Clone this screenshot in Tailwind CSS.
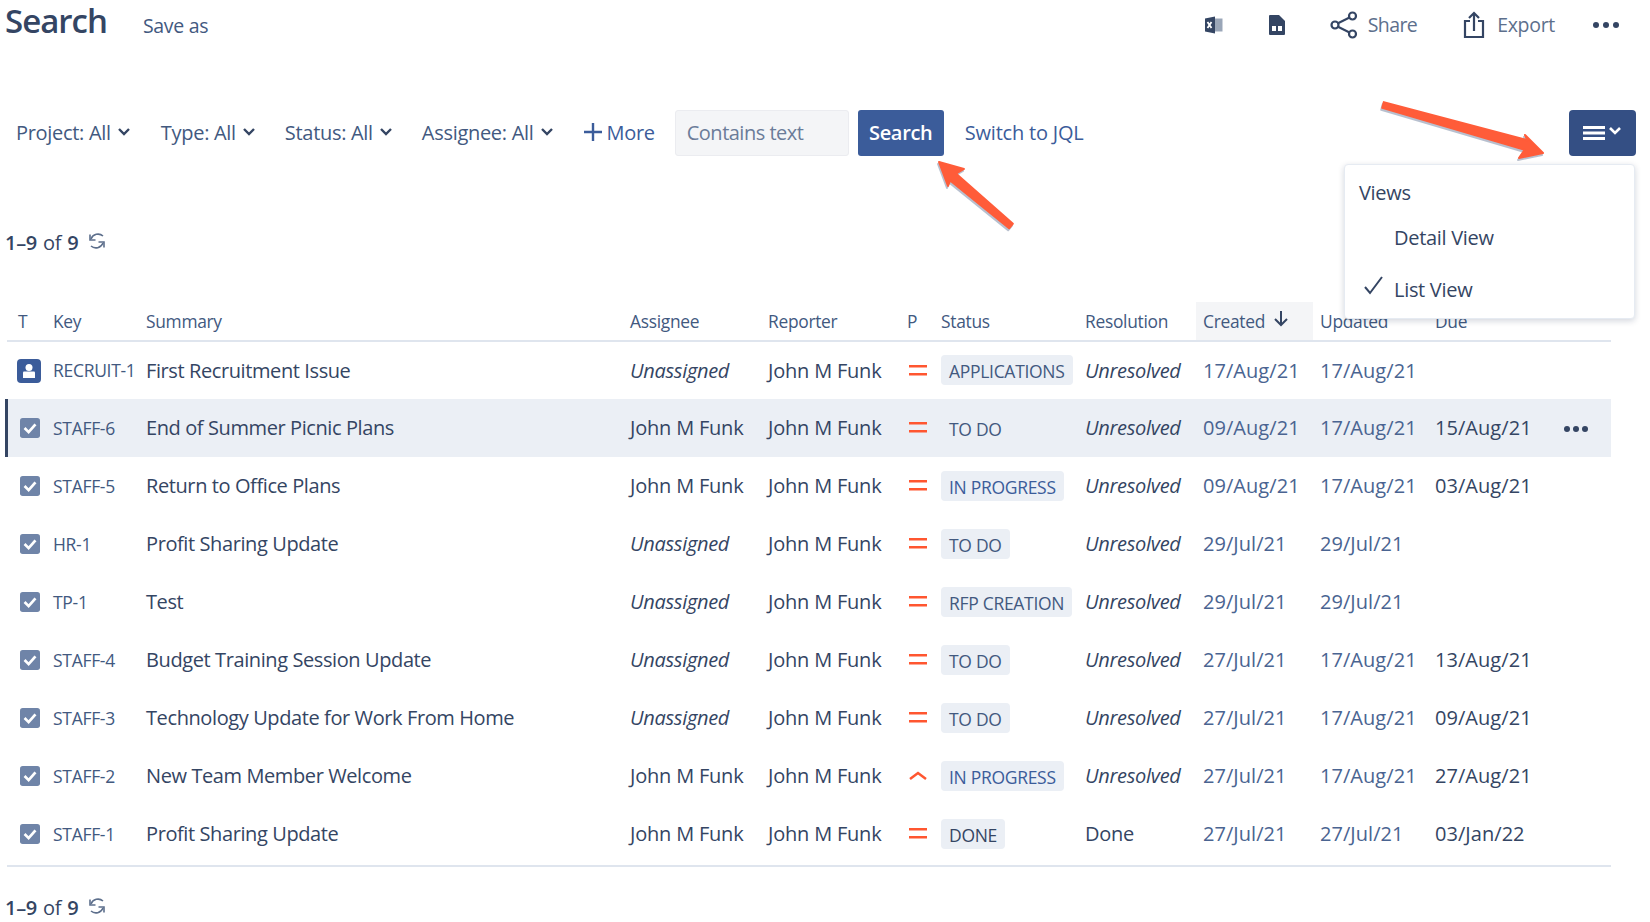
<!DOCTYPE html>
<html lang="en">
<head>
<meta charset="UTF-8">
<meta name="viewport" content="width=device-width, initial-scale=1.0">
<script src="https://cdn.jsdelivr.net/npm/@tailwindcss/browser@4"></script>
<title>Search</title>
</head>
<body class="bg-white">
<div class="relative w-[1650px] h-[922px] overflow-hidden font-['Open_Sans','Noto_Sans',sans-serif] text-[#344563] text-[20px] tracking-[-0.3px]">

  <!-- page header -->
  <header class="flex items-center h-[50px] pl-[5px] pr-[30px]">
    <h1 class="-mt-[10px] text-[33px] font-semibold leading-none tracking-[-1px] text-[#344563]">Search</h1>
    <a class="ml-[36px] mt-[1px] text-[19.500px] text-[#42597f]">Save as</a>
    <div class="ml-auto flex items-center text-[#5d6f8c]">
      <svg class="w-[20px] h-[20px] mr-[44px] text-[#344563]" viewBox="0 0 20 20"><path fill="#9aa6b8" d="M9 3.500h9.500v13H9z"/><path fill="currentColor" d="M1 3.500 11 1.500v17l-10-2z"/><path fill="none" stroke="#fff" stroke-width="1.800" d="m3.500 7 4 6m0-6-4 6"/></svg>
      <svg class="w-[18px] h-[22px] mr-[44px] text-[#344563]" viewBox="0 0 18 22"><path fill="currentColor" d="M2 1h9l6 6v13a1 1 0 0 1-1 1H2a1 1 0 0 1-1-1V2a1 1 0 0 1 1-1z"/><path fill="#fff" d="M4 12h10v5H4z"/><path fill="currentColor" d="M8 12h2v5H8z"/></svg>
      <svg class="w-[28px] h-[28px] mr-[10px] text-[#344563]" viewBox="0 0 28 28" fill="none" stroke="currentColor" stroke-width="2.200"><circle cx="5" cy="14" r="3.500"/><circle cx="22.500" cy="5" r="3.500"/><circle cx="22.500" cy="23" r="3.500"/><path d="m8 12.300 11.500-5.700M8 15.700l11.500 5.700"/></svg>
      <span class="mr-[46px] text-[19.500px] tracking-[-0.6px]">Share</span>
      <svg class="w-[22px] h-[28px] mr-[12px] text-[#344563]" viewBox="0 0 22 28" fill="none" stroke="currentColor" stroke-width="2.200"><path d="M7 10H2v16h18V10h-5M11 20V2M6 7l5-5 5 5"/></svg>
      <span class="mr-[38px] text-[19.500px]">Export</span>
      <div class="flex gap-[4px] mr-[1px]"><i class="w-[6px] h-[6px] rounded-full bg-[#344563]"></i><i class="w-[6px] h-[6px] rounded-full bg-[#344563]"></i><i class="w-[6px] h-[6px] rounded-full bg-[#344563]"></i></div>
    </div>
  </header>

  <!-- filter bar -->
  <div class="flex items-center h-[46px] mt-[60px] pl-[16px] pr-[14px] text-[#42597f]">
    <span>Project: All</span>
    <svg class="w-[14px] h-[10px] ml-[6px] mr-[30px] mb-[3px]" viewBox="0 0 14 10" fill="none" stroke="#344563" stroke-width="2.400"><path d="m2 2 5 5 5-5"/></svg>
    <span>Type: All</span>
    <svg class="w-[14px] h-[10px] ml-[6px] mr-[29px] mb-[3px]" viewBox="0 0 14 10" fill="none" stroke="#344563" stroke-width="2.400"><path d="m2 2 5 5 5-5"/></svg>
    <span>Status: All</span>
    <svg class="w-[14px] h-[10px] ml-[6px] mr-[29px] mb-[3px]" viewBox="0 0 14 10" fill="none" stroke="#344563" stroke-width="2.400"><path d="m2 2 5 5 5-5"/></svg>
    <span>Assignee: All</span>
    <svg class="w-[14px] h-[10px] ml-[6px] mr-[30px] mb-[3px]" viewBox="0 0 14 10" fill="none" stroke="#344563" stroke-width="2.400"><path d="m2 2 5 5 5-5"/></svg>
    <svg class="w-[18px] h-[18px] mr-[5px] mb-[2px]" viewBox="0 0 18 18" fill="none" stroke="#3b5c9a" stroke-width="2.400"><path d="M9 0v18M0 9h18"/></svg>
    <span class="text-[#3b5c9a] mr-[20px]">More</span>
    <div class="flex items-center w-[174px] h-[46px] pl-[11px] bg-[#f4f5f7] border border-[#ebecf0] rounded-[3px] text-[#6b7c99] tracking-[-0.5px]">Contains text</div>
    <button class="w-[86px] h-[46px] ml-[9px] rounded-[3px] bg-[#3b5c9a] text-white font-semibold">Search</button>
    <span class="ml-[21px] text-[#3b5c9a] tracking-[-0.2px]">Switch to JQL</span>
    <button class="ml-auto flex items-center justify-center gap-[3px] w-[67px] h-[46px] rounded-[4px] bg-[#344f84]">
      <svg class="w-[22px] h-[16px]" viewBox="0 0 22 16" fill="#fff"><path d="M0 1h22v3H0zM0 6.500h22v3H0zM0 12h22v3H0z"/></svg>
      <svg class="w-[14px] h-[10px] mb-[4px]" viewBox="0 0 14 10" fill="none" stroke="#fff" stroke-width="2.600"><path d="m2 2 5 5 5-5"/></svg>
    </button>
  </div>

  <!-- count -->
  <div class="flex items-center h-[30px] mt-[72px] pl-[5px] text-[#344563]">
    <b class="font-semibold">1–9</b><span class="mx-[6px]">of</span><b class="font-semibold">9</b>
    <svg class="w-[20px] h-[22px] ml-[9px] mb-[5px]" viewBox="0 0 20 20" fill="none" stroke="#5d6f8c" stroke-width="1.600"><path d="M16 5A7.500 7.500 0 0 0 4 8"/><path d="M3 3.500V9h5.500"/><path d="M4 15a7.500 7.500 0 0 0 12-3"/><path d="M17 16.500V11h-5.500"/></svg>
  </div>

  <!-- issue table -->
  <table class="ml-[7px] mt-[44px] w-[1604px] table-fixed border-collapse">
    <colgroup>
      <col class="w-[46px]"><col class="w-[93px]"><col class="w-[484px]"><col class="w-[138px]"><col class="w-[139px]"><col class="w-[34px]"><col class="w-[144px]"><col class="w-[111px]"><col class="w-[117px]"><col class="w-[115px]"><col class="w-[118px]"><col>
    </colgroup>
    <thead>
      <tr class="h-[39px] border-b-2 border-[#dfe5ee] text-left text-[17.400px] text-[#42597f] [&>th]:font-medium [&>th]:pt-[1px]">
        <th class="pl-[11px]">T</th><th>Key</th><th>Summary</th><th>Assignee</th><th>Reporter</th><th>P</th><th>Status</th><th>Resolution</th>
        <th class="bg-[#f4f5f7] pl-[7px]"><span class="inline-flex items-center gap-[9px]">Created<svg class="w-[14px] h-[16px] mb-[4px]" viewBox="0 0 14 16" fill="none" stroke="#344563" stroke-width="2"><path d="M7 0v14M1 8l6 6 6-6"/></svg></span></th>
        <th class="pl-[7px]">Updated</th><th class="pl-[7px]">Due</th><th></th>
      </tr>
    </thead>
    <tbody class="[&>tr]:h-[58px] [&_td]:py-0 [&_td]:whitespace-nowrap">
      <tr>
        <td class="pl-[10px]"><svg class="w-[24px] h-[24px]" viewBox="0 0 24 24"><rect width="24" height="24" rx="4" fill="#3b5c9a"/><circle cx="12" cy="8.500" r="3.500" fill="#fff"/><path fill="#fff" d="M6 13.500q0-1 1-1h10q1 0 1 1V19H6z"/></svg></td>
        <td class="text-[17.500px] text-[#42597f]">RECRUIT-1</td><td class="tracking-[-0.4px]">First Recruitment Issue</td><td class="italic">Unassigned</td><td class="tracking-[-0.2px]">John M Funk</td>
        <td><svg class="w-[18px] h-[12px] ml-[2px]" viewBox="0 0 18 12" fill="#ff5630"><path d="M0 0h18v2.500H0zM0 8h18v2.500H0z"/></svg></td>
        <td><span class="inline-block h-[30px] px-[8px] rounded-[4px] bg-[#ebeff5] text-[17.500px] leading-[32px] font-medium text-[#42597f]">APPLICATIONS</span></td>
        <td class="italic">Unresolved</td><td class="pl-[7px] tracking-[0.05px] text-[#4a6491]">17/Aug/21</td><td class="pl-[7px] tracking-[0.05px] text-[#4a6491]">17/Aug/21</td><td></td><td></td>
      </tr>
      <tr class="bg-[#ebeff5]">
        <td class="relative pl-[13px]"><i class="absolute left-[-2px] top-0 w-[3px] h-[58px] bg-[#344563]"></i><svg class="w-[20px] h-[20px]" viewBox="0 0 22 22"><rect width="22" height="22" rx="3" fill="#6f84a8"/><path d="m5 11 4.500 4.500L17 7" fill="none" stroke="#fff" stroke-width="3"/></svg></td>
        <td class="text-[17.500px] text-[#42597f]">STAFF-6</td><td class="tracking-[-0.4px]">End of Summer Picnic Plans</td><td class="tracking-[-0.2px]">John M Funk</td><td class="tracking-[-0.2px]">John M Funk</td>
        <td><svg class="w-[18px] h-[12px] ml-[2px]" viewBox="0 0 18 12" fill="#ff5630"><path d="M0 0h18v2.500H0zM0 8h18v2.500H0z"/></svg></td>
        <td><span class="inline-block h-[30px] px-[8px] rounded-[4px] bg-[#ebeff5] text-[17.500px] leading-[32px] font-medium text-[#42597f]">TO DO</span></td>
        <td class="italic">Unresolved</td><td class="pl-[7px] tracking-[0.05px] text-[#4a6491]">09/Aug/21</td><td class="pl-[7px] tracking-[0.05px] text-[#4a6491]">17/Aug/21</td><td class="pl-[7px] tracking-[0.05px]">15/Aug/21</td>
        <td><div class="flex gap-[3px] pl-[18px] pt-[2px]"><i class="w-[6px] h-[6px] rounded-full bg-[#344563]"></i><i class="w-[6px] h-[6px] rounded-full bg-[#344563]"></i><i class="w-[6px] h-[6px] rounded-full bg-[#344563]"></i></div></td>
      </tr>
      <tr>
        <td class="pl-[13px]"><svg class="w-[20px] h-[20px]" viewBox="0 0 22 22"><rect width="22" height="22" rx="3" fill="#6f84a8"/><path d="m5 11 4.500 4.500L17 7" fill="none" stroke="#fff" stroke-width="3"/></svg></td>
        <td class="text-[17.500px] text-[#42597f]">STAFF-5</td><td class="tracking-[-0.4px]">Return to Office Plans</td><td class="tracking-[-0.2px]">John M Funk</td><td class="tracking-[-0.2px]">John M Funk</td>
        <td><svg class="w-[18px] h-[12px] ml-[2px]" viewBox="0 0 18 12" fill="#ff5630"><path d="M0 0h18v2.500H0zM0 8h18v2.500H0z"/></svg></td>
        <td><span class="inline-block h-[30px] px-[8px] rounded-[4px] bg-[#ebeff5] text-[17.500px] leading-[32px] font-medium text-[#3b5c9a]">IN PROGRESS</span></td>
        <td class="italic">Unresolved</td><td class="pl-[7px] tracking-[0.05px] text-[#4a6491]">09/Aug/21</td><td class="pl-[7px] tracking-[0.05px] text-[#4a6491]">17/Aug/21</td><td class="pl-[7px] tracking-[0.05px]">03/Aug/21</td><td></td>
      </tr>
      <tr>
        <td class="pl-[13px]"><svg class="w-[20px] h-[20px]" viewBox="0 0 22 22"><rect width="22" height="22" rx="3" fill="#6f84a8"/><path d="m5 11 4.500 4.500L17 7" fill="none" stroke="#fff" stroke-width="3"/></svg></td>
        <td class="text-[17.500px] text-[#42597f]">HR-1</td><td class="tracking-[-0.4px]">Profit Sharing Update</td><td class="italic">Unassigned</td><td class="tracking-[-0.2px]">John M Funk</td>
        <td><svg class="w-[18px] h-[12px] ml-[2px]" viewBox="0 0 18 12" fill="#ff5630"><path d="M0 0h18v2.500H0zM0 8h18v2.500H0z"/></svg></td>
        <td><span class="inline-block h-[30px] px-[8px] rounded-[4px] bg-[#ebeff5] text-[17.500px] leading-[32px] font-medium text-[#42597f]">TO DO</span></td>
        <td class="italic">Unresolved</td><td class="pl-[7px] tracking-[0.05px] text-[#4a6491]">29/Jul/21</td><td class="pl-[7px] tracking-[0.05px] text-[#4a6491]">29/Jul/21</td><td></td><td></td>
      </tr>
      <tr>
        <td class="pl-[13px]"><svg class="w-[20px] h-[20px]" viewBox="0 0 22 22"><rect width="22" height="22" rx="3" fill="#6f84a8"/><path d="m5 11 4.500 4.500L17 7" fill="none" stroke="#fff" stroke-width="3"/></svg></td>
        <td class="text-[17.500px] text-[#42597f]">TP-1</td><td class="tracking-[-0.4px]">Test</td><td class="italic">Unassigned</td><td class="tracking-[-0.2px]">John M Funk</td>
        <td><svg class="w-[18px] h-[12px] ml-[2px]" viewBox="0 0 18 12" fill="#ff5630"><path d="M0 0h18v2.500H0zM0 8h18v2.500H0z"/></svg></td>
        <td><span class="inline-block h-[30px] px-[8px] rounded-[4px] bg-[#ebeff5] text-[17.500px] leading-[32px] font-medium text-[#42597f]">RFP CREATION</span></td>
        <td class="italic">Unresolved</td><td class="pl-[7px] tracking-[0.05px] text-[#4a6491]">29/Jul/21</td><td class="pl-[7px] tracking-[0.05px] text-[#4a6491]">29/Jul/21</td><td></td><td></td>
      </tr>
      <tr>
        <td class="pl-[13px]"><svg class="w-[20px] h-[20px]" viewBox="0 0 22 22"><rect width="22" height="22" rx="3" fill="#6f84a8"/><path d="m5 11 4.500 4.500L17 7" fill="none" stroke="#fff" stroke-width="3"/></svg></td>
        <td class="text-[17.500px] text-[#42597f]">STAFF-4</td><td class="tracking-[-0.4px]">Budget Training Session Update</td><td class="italic">Unassigned</td><td class="tracking-[-0.2px]">John M Funk</td>
        <td><svg class="w-[18px] h-[12px] ml-[2px]" viewBox="0 0 18 12" fill="#ff5630"><path d="M0 0h18v2.500H0zM0 8h18v2.500H0z"/></svg></td>
        <td><span class="inline-block h-[30px] px-[8px] rounded-[4px] bg-[#ebeff5] text-[17.500px] leading-[32px] font-medium text-[#42597f]">TO DO</span></td>
        <td class="italic">Unresolved</td><td class="pl-[7px] tracking-[0.05px] text-[#4a6491]">27/Jul/21</td><td class="pl-[7px] tracking-[0.05px] text-[#4a6491]">17/Aug/21</td><td class="pl-[7px] tracking-[0.05px]">13/Aug/21</td><td></td>
      </tr>
      <tr>
        <td class="pl-[13px]"><svg class="w-[20px] h-[20px]" viewBox="0 0 22 22"><rect width="22" height="22" rx="3" fill="#6f84a8"/><path d="m5 11 4.500 4.500L17 7" fill="none" stroke="#fff" stroke-width="3"/></svg></td>
        <td class="text-[17.500px] text-[#42597f]">STAFF-3</td><td class="tracking-[-0.4px]">Technology Update for Work From Home</td><td class="italic">Unassigned</td><td class="tracking-[-0.2px]">John M Funk</td>
        <td><svg class="w-[18px] h-[12px] ml-[2px]" viewBox="0 0 18 12" fill="#ff5630"><path d="M0 0h18v2.500H0zM0 8h18v2.500H0z"/></svg></td>
        <td><span class="inline-block h-[30px] px-[8px] rounded-[4px] bg-[#ebeff5] text-[17.500px] leading-[32px] font-medium text-[#42597f]">TO DO</span></td>
        <td class="italic">Unresolved</td><td class="pl-[7px] tracking-[0.05px] text-[#4a6491]">27/Jul/21</td><td class="pl-[7px] tracking-[0.05px] text-[#4a6491]">17/Aug/21</td><td class="pl-[7px] tracking-[0.05px]">09/Aug/21</td><td></td>
      </tr>
      <tr>
        <td class="pl-[13px]"><svg class="w-[20px] h-[20px]" viewBox="0 0 22 22"><rect width="22" height="22" rx="3" fill="#6f84a8"/><path d="m5 11 4.500 4.500L17 7" fill="none" stroke="#fff" stroke-width="3"/></svg></td>
        <td class="text-[17.500px] text-[#42597f]">STAFF-2</td><td class="tracking-[-0.4px]">New Team Member Welcome</td><td class="tracking-[-0.2px]">John M Funk</td><td class="tracking-[-0.2px]">John M Funk</td>
        <td><svg class="w-[18px] h-[12px] ml-[2px]" viewBox="0 0 18 12" fill="none" stroke="#ff5630" stroke-width="2.500"><path d="m1 9 8-6 8 6"/></svg></td>
        <td><span class="inline-block h-[30px] px-[8px] rounded-[4px] bg-[#ebeff5] text-[17.500px] leading-[32px] font-medium text-[#3b5c9a]">IN PROGRESS</span></td>
        <td class="italic">Unresolved</td><td class="pl-[7px] tracking-[0.05px] text-[#4a6491]">27/Jul/21</td><td class="pl-[7px] tracking-[0.05px] text-[#4a6491]">17/Aug/21</td><td class="pl-[7px] tracking-[0.05px]">27/Aug/21</td><td></td>
      </tr>
      <tr>
        <td class="pl-[13px]"><svg class="w-[20px] h-[20px]" viewBox="0 0 22 22"><rect width="22" height="22" rx="3" fill="#6f84a8"/><path d="m5 11 4.500 4.500L17 7" fill="none" stroke="#fff" stroke-width="3"/></svg></td>
        <td class="text-[17.500px] text-[#42597f]">STAFF-1</td><td class="tracking-[-0.4px]">Profit Sharing Update</td><td class="tracking-[-0.2px]">John M Funk</td><td class="tracking-[-0.2px]">John M Funk</td>
        <td><svg class="w-[18px] h-[12px] ml-[2px]" viewBox="0 0 18 12" fill="#ff5630"><path d="M0 0h18v2.500H0zM0 8h18v2.500H0z"/></svg></td>
        <td><span class="inline-block h-[30px] px-[8px] rounded-[4px] bg-[#ebeff5] text-[17.500px] leading-[32px] font-medium text-[#344563]">DONE</span></td>
        <td>Done</td><td class="pl-[7px] tracking-[0.05px] text-[#4a6491]">27/Jul/21</td><td class="pl-[7px] tracking-[0.05px] text-[#4a6491]">27/Jul/21</td><td class="pl-[7px] tracking-[0.05px]">03/Jan/22</td><td></td>
      </tr>
    </tbody>
    <tfoot>
      <tr class="h-[3px] border-b-2 border-[#dfe5ee]"><td colspan="12"></td></tr>
    </tfoot>
  </table>

  <!-- bottom count -->
  <div class="flex items-center h-[30px] mt-[26px] pl-[5px] text-[#344563]">
    <b class="font-semibold">1–9</b><span class="mx-[6px]">of</span><b class="font-semibold">9</b>
    <svg class="w-[20px] h-[22px] ml-[9px] mb-[5px]" viewBox="0 0 20 20" fill="none" stroke="#5d6f8c" stroke-width="1.600"><path d="M16 5A7.500 7.500 0 0 0 4 8"/><path d="M3 3.500V9h5.500"/><path d="M4 15a7.500 7.500 0 0 0 12-3"/><path d="M17 16.500V11h-5.500"/></svg>
  </div>

  <!-- views dropdown -->
  <div class="absolute left-[1344px] top-[164px] w-[291px] h-[155px] pt-[13px] bg-white rounded-[4px] border border-[#e6ebf2] shadow-[0_2px_6px_rgba(9,30,66,0.18)]">
    <div class="pl-[14px] h-[30px] leading-[30px]">Views</div>
    <div class="pl-[49px] h-[30px] mt-[15px] leading-[30px]">Detail View</div>
    <div class="relative pl-[49px] h-[30px] mt-[22px] leading-[30px]">
      <svg class="absolute left-[19px] top-[0px] w-[20px] h-[20px]" viewBox="0 0 20 20" fill="none" stroke="#344563" stroke-width="2"><path d="m1 12 5 6L18 2"/></svg>List View
    </div>
  </div>

  <!-- annotation arrows -->
  <svg class="absolute left-0 top-0 w-[1650px] h-[922px] pointer-events-none" viewBox="0 0 1650 922">
    <g transform="translate(-1 2)" fill="#7f8ea8" stroke="#7f8ea8" stroke-width="2" stroke-linejoin="round" opacity="0.55">
      <path d="M1383.800 102.100 1527.300 140.200 1525 135 1543 153 1519 158 1524.700 149.800 1382.200 107.900z"/>
      <path d="M1012.900 223.700 955.900 173.600 964 169 939 162 948 186 950.100 180.400 1009.100 228.300z"/>
    </g>
    <g fill="#ff5c39" stroke="#ff5c39" stroke-width="2" stroke-linejoin="round">
      <path d="M1383.800 102.100 1527.300 140.200 1525 135 1543 153 1519 158 1524.700 149.800 1382.200 107.900z"/>
      <path d="M1012.900 223.700 955.900 173.600 964 169 939 162 948 186 950.100 180.400 1009.100 228.300z"/>
    </g>
  </svg>
</div>
</body>
</html>
